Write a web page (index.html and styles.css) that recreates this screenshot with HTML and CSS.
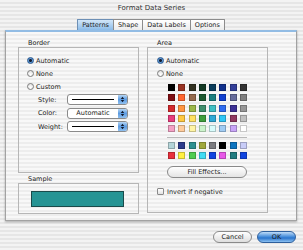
FILE: index.html
```html
<!DOCTYPE html>
<html lang="en">
<head>
    <meta charset="UTF-8">
    <meta name="viewport" content="width=device-width, initial-scale=1.0">
    <title>Format Data Series</title>
    <link rel="stylesheet" href="styles.css">
</head>
<body>
    <div class="title">Format Data Series</div>

    <div class="tabs">
        <div class="tab active">Patterns</div>
        <div class="tab">Shape</div>
        <div class="tab">Data Labels</div>
        <div class="tab">Options</div>
    </div>

    <div class="panel">
        <div class="col">
            <div class="group-label">Border</div>
            <div class="group border-box">
                <div class="radio-row"><span class="radio on"></span>Automatic</div>
                <div class="radio-row"><span class="radio"></span>None</div>
                <div class="radio-row"><span class="radio"></span>Custom</div>
                <div class="fields">
                    <div class="field">
                        <span class="field-label">Style:</span>
                        <div class="dropdown">
                            <div class="dd-value"><span class="dd-line"></span></div>
                            <div class="dd-arrow">
                                <svg width="9" height="9" viewBox="0 0 9 9"><path d="M2.8 4 L4.5 1.8 L6.2 4 Z M2.8 5 L4.5 7.2 L6.2 5 Z" fill="#10182a"/></svg>
                            </div>
                        </div>
                    </div>
                    <div class="field">
                        <span class="field-label">Color:</span>
                        <div class="dropdown">
                            <div class="dd-value">Automatic</div>
                            <div class="dd-arrow">
                                <svg width="9" height="9" viewBox="0 0 9 9"><path d="M2.8 4 L4.5 1.8 L6.2 4 Z M2.8 5 L4.5 7.2 L6.2 5 Z" fill="#10182a"/></svg>
                            </div>
                        </div>
                    </div>
                    <div class="field">
                        <span class="field-label">Weight:</span>
                        <div class="dropdown">
                            <div class="dd-value"><span class="dd-line"></span></div>
                            <div class="dd-arrow">
                                <svg width="9" height="9" viewBox="0 0 9 9"><path d="M2.8 4 L4.5 1.8 L6.2 4 Z M2.8 5 L4.5 7.2 L6.2 5 Z" fill="#10182a"/></svg>
                            </div>
                        </div>
                    </div>
                </div>
            </div>

            <div class="group-label sample-label">Sample</div>
            <div class="group sample-box">
                <div class="sample"></div>
            </div>
        </div>

        <div class="col">
            <div class="group-label">Area</div>
            <div class="group area-box">
                <div class="radio-row"><span class="radio on"></span>Automatic</div>
                <div class="radio-row"><span class="radio"></span>None</div>
                <div class="palette">
                    <div id="mainColors" class="swatches"></div>
                    <div class="separator"></div>
                    <div id="chartColors" class="swatches chart"></div>
                    <div class="fill-btn">Fill Effects...</div>
                </div>
                <div class="check-row"><span class="checkbox"></span>Invert if negative</div>
            </div>
        </div>
    </div>

    <div class="actions">
        <div class="btn">Cancel</div>
        <div class="btn ok">OK</div>
    </div>

    <script>
        const mainColors = [
            '#000000', '#993322', '#333322', '#143a24', '#0a3d5c', '#10308c', '#333f99', '#333333',
            '#800f14', '#ff6630', '#946a4c', '#1c5a30', '#1a7f80', '#0f3fd0', '#666c9c', '#808080',
            '#d42a2e', '#ff9540', '#9cb84a', '#3f8f6c', '#3fbfc4', '#2f6cf0', '#3c3096', '#969696',
            '#e83c7c', '#ffc840', '#ffe060', '#3e9e3c', '#2faad6', '#2fc6f6', '#903860', '#c0c0c0',
            '#f4a0c4', '#ffcc9c', '#fff4a4', '#ccf4cc', '#d8fcfc', '#a0ccf4', '#c8a4f8', '#ffffff'
        ];
        const chartColors = [
            '#b4d4d8', '#2c3c8c', '#2e9090', '#a0a83c', '#7c7c80', '#000000', '#0c74c0', '#c8ccf8',
            '#e8303c', '#fff040', '#50cc50', '#40dcf4', '#1044e0', '#e858e8', '#207c80', '#1044e0'
        ];

        function fillSwatches(id, colors) {
            document.getElementById(id).innerHTML = colors
                .map(c => `<span class="swatch" style="background:${c}"></span>`)
                .join('');
        }

        fillSwatches('mainColors', mainColors);
        fillSwatches('chartColors', chartColors);
    </script>
</body>
</html>
```

FILE: styles.css
```css
* { box-sizing: border-box; }
body {
    margin: 0; width: 303px; height: 250px; overflow: hidden;
    font-family: "DejaVu Sans", sans-serif; font-size: 6.5px; color: #1c1c1c;
    background: repeating-linear-gradient(to bottom, #f3f3f3 0 2px, #e6e6e6 2px 4px);
}

.title { height: 19px; padding-top: 2px; line-height: 12px; font-size: 7px; text-align: center; color: #333; }

/* tabs */
.tabs { display: flex; justify-content: center; height: 11px; }
.tab {
    height: 11px; line-height: 10px; padding: 0 4px; margin-left: -1px;
    border: 1px solid #8c8c8c; border-bottom: 0; border-radius: 1px 1px 0 0;
    background: linear-gradient(#ffffff, #ececec);
}
.tab.active { background: linear-gradient(#d2e6f8, #8cbce9); border-color: #6d8fb5; }

/* panel */
.panel {
    display: flex; gap: 8px;
    margin-left: 5px; width: 292px; height: 191px; padding: 8px 0 0 12px;
    border: 1px solid #a2a2a2; border-top: 2px solid #92bce4;
    box-shadow: 0 1px 2px rgba(0,0,0,0.3);
    background: repeating-linear-gradient(to bottom, #f8f8f8 0 2px, #ededed 2px 4px);
}
.col { width: 121px; }
.group-label { height: 7px; line-height: 7px; padding-left: 10px; }
.sample-label { margin-top: 3px; }
.group { border: 1px solid #b6b6b6; }

.border-box { height: 126px; padding: 6px 0 0 8px; }
.area-box { height: 166px; padding: 6px 0 0 9px; }
.sample-box { height: 31px; padding: 7px 0 0 12px; }
.sample { width: 93px; height: 16px; background: #269494; border: 1px solid #1a4a4a; }

/* radios and checkbox */
.radio-row, .check-row { display: flex; align-items: center; height: 13px; gap: 2px; }
.radio {
    width: 7px; height: 7px; border-radius: 50%;
    border: 1px solid #7d7d7d;
    background: radial-gradient(circle at 50% 70%, #ffffff, #dcdcdc);
}
.radio.on {
    border-color: #2d5a8e;
    background: radial-gradient(circle, #0f1c33 0 1.3px, #6aa4dd 1.6px, #3b7cc6);
}
.check-row { margin-top: 7px; gap: 3px; }
.checkbox {
    width: 7px; height: 7px; border: 1px solid #8a8a8a; border-radius: 1px;
    background: linear-gradient(#ffffff, #e2e2e2);
}

/* popups */
.fields { display: flex; flex-direction: column; gap: 2.5px; margin-top: 1px; }
.field { display: flex; align-items: center; height: 11px; padding-left: 11px; }
.field-label { width: 29px; }
.dropdown {
    display: flex; width: 61px; height: 11px;
    border: 1px solid #8a8a8a; border-radius: 3px; background: #fff;
}
.dd-value { flex: 1; display: flex; align-items: center; justify-content: center; line-height: 9px; }
.dd-line { flex: 1; height: 1px; background: #000; margin: 0 4px; }
.dd-arrow {
    width: 9px; border-radius: 0 2px 2px 0;
    background: linear-gradient(#b5d6f5, #5d9be0 50%, #8fc0f0);
}
.dd-arrow svg { display: block; }

/* colour palette */
.palette { margin: 4px 0 0 11px; }
.swatches { display: grid; grid-template-columns: repeat(8, 7px); grid-auto-rows: 7px; gap: 3.25px 3.3px; }
.swatch { border: 1px solid rgba(0,0,0,0.22); }
.separator { width: 80px; height: 1px; margin: 5px 0 4px -1px; background: #b8b8b8; }
.fill-btn {
    width: 80px; height: 12px; margin: 7px 0 0 -1px;
    border: 1px solid #8a8a8a; border-radius: 6px;
    background: linear-gradient(#ffffff, #e4e4e4);
    text-align: center; line-height: 10px;
}

/* bottom buttons */
.actions { display: flex; justify-content: flex-end; gap: 5px; padding-right: 7px; margin-top: 10px; }
.btn {
    width: 39px; height: 12px; border: 1px solid #8a8a8a; border-radius: 6px;
    background: linear-gradient(#ffffff, #dedede);
    text-align: center; line-height: 10px;
}
.btn.ok {
    border-color: #2e5f9c;
    background: linear-gradient(#bfdcf8, #3f88d8 50%, #2a74cc 60%, #8cc2f2);
}
```
